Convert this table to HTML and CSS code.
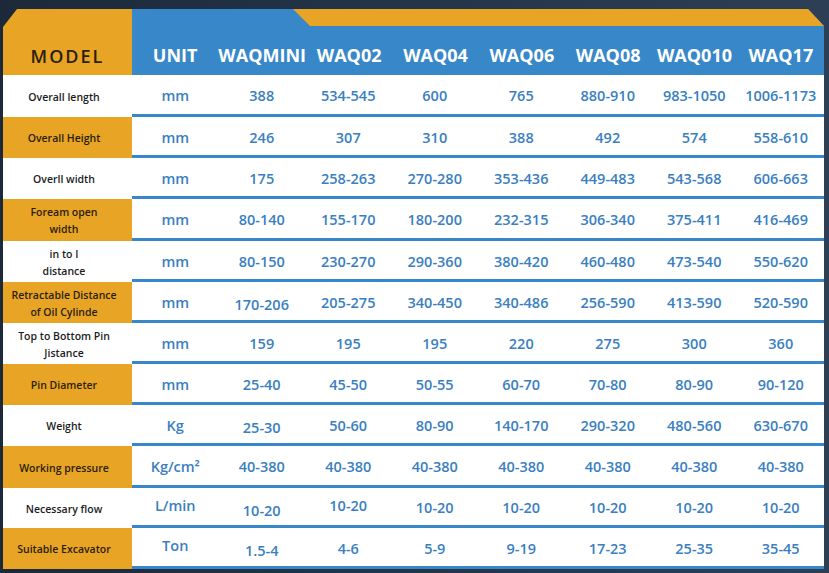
FILE: index.html
```html
<!DOCTYPE html>
<html>
<head>
<meta charset="utf-8">
<link rel="stylesheet" href="styles.css">
</head>
<body>
<div class="sheet">
  <div class="head">
    <div class="model">MODEL</div>
    <div class="cols">
      <div class="strip"></div>
      <div>UNIT</div><div>WAQMINI</div><div>WAQ02</div><div>WAQ04</div><div>WAQ06</div><div>WAQ08</div><div>WAQ010</div><div>WAQ17</div>
    </div>
  </div>

  <div class="row r42"><div class="label">Overall length</div><div class="data"><div>mm</div><div>388</div><div>534-545</div><div>600</div><div>765</div><div>880-910</div><div>983-1050</div><div>1006-1173</div></div></div>
  <div class="row alt"><div class="label">Overall Height</div><div class="data"><div>mm</div><div>246</div><div>307</div><div>310</div><div>388</div><div>492</div><div>574</div><div>558-610</div></div></div>
  <div class="row"><div class="label">Overll width</div><div class="data"><div>mm</div><div>175</div><div>258-263</div><div>270-280</div><div>353-436</div><div>449-483</div><div>543-568</div><div>606-663</div></div></div>
  <div class="row alt r42"><div class="label">Foream open<br>width</div><div class="data"><div>mm</div><div>80-140</div><div>155-170</div><div>180-200</div><div>232-315</div><div>306-340</div><div>375-411</div><div>416-469</div></div></div>
  <div class="row"><div class="label">in to I<br>distance</div><div class="data"><div>mm</div><div>80-150</div><div>230-270</div><div>290-360</div><div>380-420</div><div>460-480</div><div>473-540</div><div>550-620</div></div></div>
  <div class="row alt"><div class="label">Retractable Distance<br>of Oil Cylinde</div><div class="data"><div>mm</div><div class="low">170-206</div><div>205-275</div><div>340-450</div><div>340-486</div><div>256-590</div><div>413-590</div><div>520-590</div></div></div>
  <div class="row"><div class="label">Top to Bottom Pin<br>Jistance</div><div class="data"><div>mm</div><div>159</div><div>195</div><div>195</div><div>220</div><div>275</div><div>300</div><div>360</div></div></div>
  <div class="row alt"><div class="label">Pin Diameter</div><div class="data"><div>mm</div><div>25-40</div><div>45-50</div><div>50-55</div><div>60-70</div><div>70-80</div><div>80-90</div><div>90-120</div></div></div>
  <div class="row"><div class="label">Weight</div><div class="data"><div>Kg</div><div class="low">25-30</div><div>50-60</div><div>80-90</div><div>140-170</div><div>290-320</div><div>480-560</div><div>630-670</div></div></div>
  <div class="row alt r42"><div class="label">Working pressure</div><div class="data"><div>Kg/cm²</div><div>40-380</div><div>40-380</div><div>40-380</div><div>40-380</div><div>40-380</div><div>40-380</div><div>40-380</div></div></div>
  <div class="row r40"><div class="label">Necessary flow</div><div class="data"><div class="high">L/min</div><div class="low">10-20</div><div class="high">10-20</div><div>10-20</div><div>10-20</div><div>10-20</div><div>10-20</div><div>10-20</div></div></div>
  <div class="row alt r41"><div class="label">Suitable Excavator</div><div class="data"><div class="high">Ton</div><div class="low">1.5-4</div><div>4-6</div><div>5-9</div><div>9-19</div><div>17-23</div><div>25-35</div><div>35-45</div></div></div>
</div>
</body>
</html>
```

FILE: styles.css
```css
* { box-sizing: border-box; }

html, body {
  margin: 0;
  height: 100%;
}

body {
  background: linear-gradient(90deg, #1b2939 0%, #24354a 50%, #2c3f55 100%);
  font-family: "Open Sans", "DejaVu Sans", sans-serif;
  overflow: hidden;
}

.sheet {
  padding: 9px 0 0 3px;
  width: 824px;
}

.head {
  display: grid;
  grid-template-columns: 129px 692px;
  height: 66px;
}

.model {
  background: #e8a424;
  clip-path: polygon(0 18px, 14px 0, 100% 0, 100% 100%, 0 100%);
  display: flex;
  align-items: center;
  justify-content: center;
  padding-top: 27px;
  font-size: 18px;
  font-weight: 600;
  letter-spacing: 2px;
  color: #2b1f0f;
}

.cols {
  position: relative;
  background: #3887c8;
  clip-path: polygon(0 0, calc(100% - 16px) 0, 100% 17px, 100% 100%, 0 100%);
  display: grid;
  grid-template-columns: repeat(8, 1fr);
  padding-top: 25px;
  color: #ffffff;
  font-size: 18px;
  font-weight: 700;
}

.cols > div:not(.strip) {
  display: flex;
  align-items: center;
  justify-content: center;
}

.strip {
  position: absolute;
  top: 0;
  left: 161px;
  right: 0;
  height: 17px;
  background: #e8a424;
  clip-path: polygon(0 0, 100% 0, 100% 100%, 17px 100%);
}

.row {
  display: grid;
  grid-template-columns: 129px 692px;
  height: 41px;
  background: #ffffff;
}

.row.r42 { height: 42px; }
.row.r40 { height: 40px; }

.label {
  display: flex;
  align-items: center;
  justify-content: center;
  text-align: center;
  font-size: 10.5px;
  font-weight: 600;
  line-height: 17px;
  color: #1c1c1c;
  padding: 2px 7px 0 0;
}

.row.alt .label {
  background: #e8a424;
  color: #2a1d0c;
}

.data {
  display: grid;
  grid-template-columns: repeat(8, 1fr);
  border-bottom: 3px solid #3887c8;
  color: #3a7fc1;
  font-size: 14.5px;
  font-weight: 600;
}

.data > div {
  display: flex;
  align-items: center;
  justify-content: center;
  padding-top: 2px;
}

.data > div.low { padding-top: 7px; }
.data > div.high { padding-top: 0; padding-bottom: 3px; }
```
